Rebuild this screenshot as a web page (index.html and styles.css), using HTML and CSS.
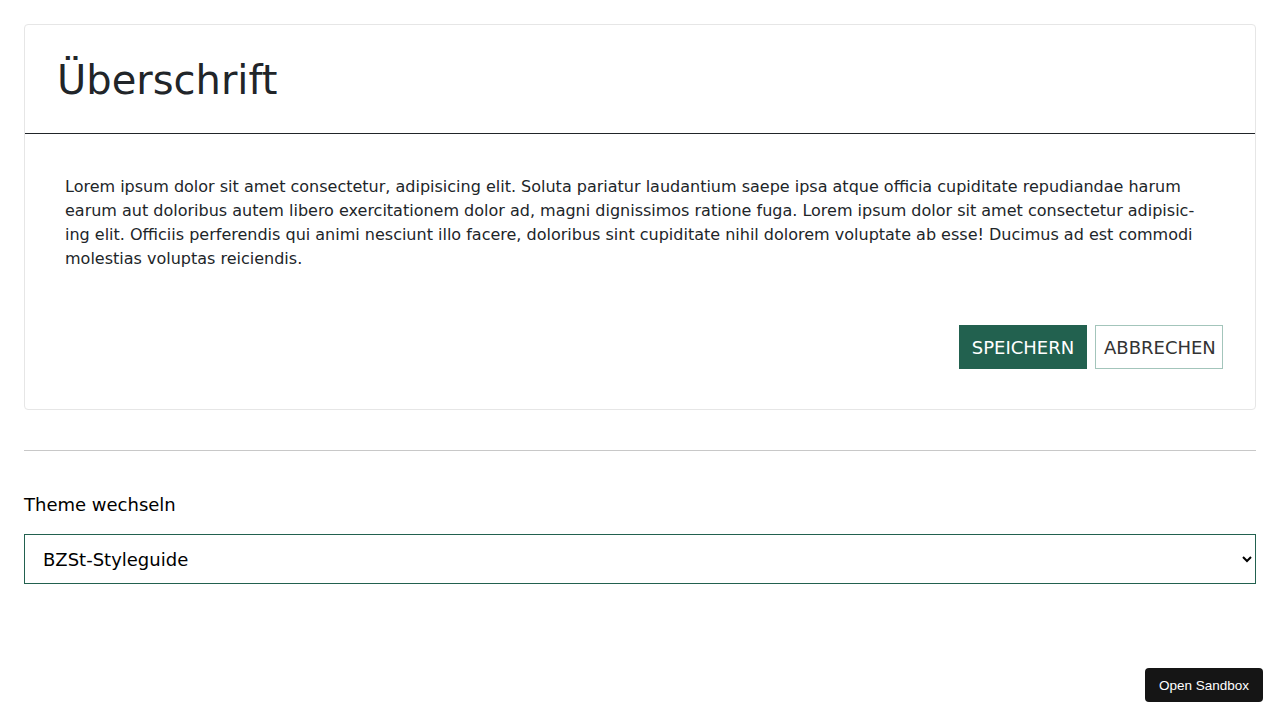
FILE: index.html
```html
<!DOCTYPE html>
<html lang="de">
<head>
<meta charset="utf-8">
<title>Theme</title>
<link rel="stylesheet" href="styles.css">
</head>
<body>
<main class="page">
  <section class="card">
    <header class="card-header">
      <h1 class="card-title">Überschrift</h1>
    </header>
    <div class="card-body">
      <p class="card-text">Lorem ipsum dolor sit amet consectetur, adipisicing elit. Soluta pariatur laudantium saepe ipsa atque officia cupiditate repudiandae harum earum aut doloribus autem libero exercitationem dolor ad, magni dignissimos ratione fuga. Lorem ipsum dolor sit amet consectetur adipisic&shy;ing elit. Officiis perferendis qui animi nesciunt illo facere, doloribus sint cupiditate nihil dolorem voluptate ab esse! Ducimus ad est commodi molestias voluptas reiciendis.</p>
    </div>
    <footer class="card-footer">
      <button class="btn btn-primary" type="button">SPEICHERN</button>
      <button class="btn btn-secondary" type="button">ABBRECHEN</button>
    </footer>
  </section>
  <hr class="divider">
  <label class="theme-label" for="theme">Theme wechseln</label>
  <select class="theme-select" id="theme">
    <option>BZSt-Styleguide</option>
  </select>
</main>
<button class="sandbox-btn" type="button">Open Sandbox</button>
</body>
</html>
```
FILE: styles.css
```css
* { box-sizing: border-box; }
html, body { margin: 0; background: #fff; }
body {
  font-family: "DejaVu Sans", Verdana, sans-serif;
  color: #212529;
}
.page {
  padding: 24px;
}
.card {
  border: 1px solid #e6e6e6;
  border-radius: 4px;
  background: #fff;
}
.card-header {
  height: 109px;
  padding: 0 32px;
  display: flex;
  align-items: center;
  border-bottom: 1px solid #212529;
}
.card-title {
  margin: 0;
  font-size: 40px;
  font-weight: 400;
  line-height: 1.2;
  color: #212529;
  padding-top: 2px;
}
.card-body {
  padding: 41px 48px 0 40px;
}
.card-text {
  margin: 0;
  font-size: 16px;
  line-height: 24px;
  color: #212529;
  hyphens: manual;
}
.card-footer {
  display: flex;
  justify-content: flex-end;
  gap: 8px;
  padding: 54px 32px 40px;
}
.btn {
  height: 44px;
  padding: 0 8px;
  font-family: "DejaVu Sans", Verdana, sans-serif;
  font-size: 18px;
  border-radius: 0;
  cursor: pointer;
  width: 128px;
}
.btn-primary {
  background: #22614f;
  color: #fff;
  border: 1px solid #22614f;
}
.btn-secondary {
  background: #fff;
  color: #333;
  border: 1px solid #a3c5bb;
}
.divider {
  margin: 40px 0 0;
  border: 0;
  border-top: 1px solid #c8c8c8;
}
.theme-label {
  display: block;
  margin-top: 42px;
  font-size: 18px;
  line-height: 24px;
  color: #000;
}
.theme-select {
  display: block;
  width: 100%;
  height: 50px;
  margin-top: 17px;
  padding: 0 14px;
  font-family: "DejaVu Sans", Verdana, sans-serif;
  font-size: 18px;
  color: #000;
  background: #fff;
  border: 1px solid #22614f;
  border-radius: 0;
}
.sandbox-btn {
  position: fixed;
  right: 17px;
  bottom: 18px;
  height: 34px;
  padding: 0 14px;
  background: #151515;
  color: #fff;
  border: 0;
  border-radius: 4px;
  font-family: "Liberation Sans", Arial, sans-serif;
  font-size: 13.5px;
}
```
